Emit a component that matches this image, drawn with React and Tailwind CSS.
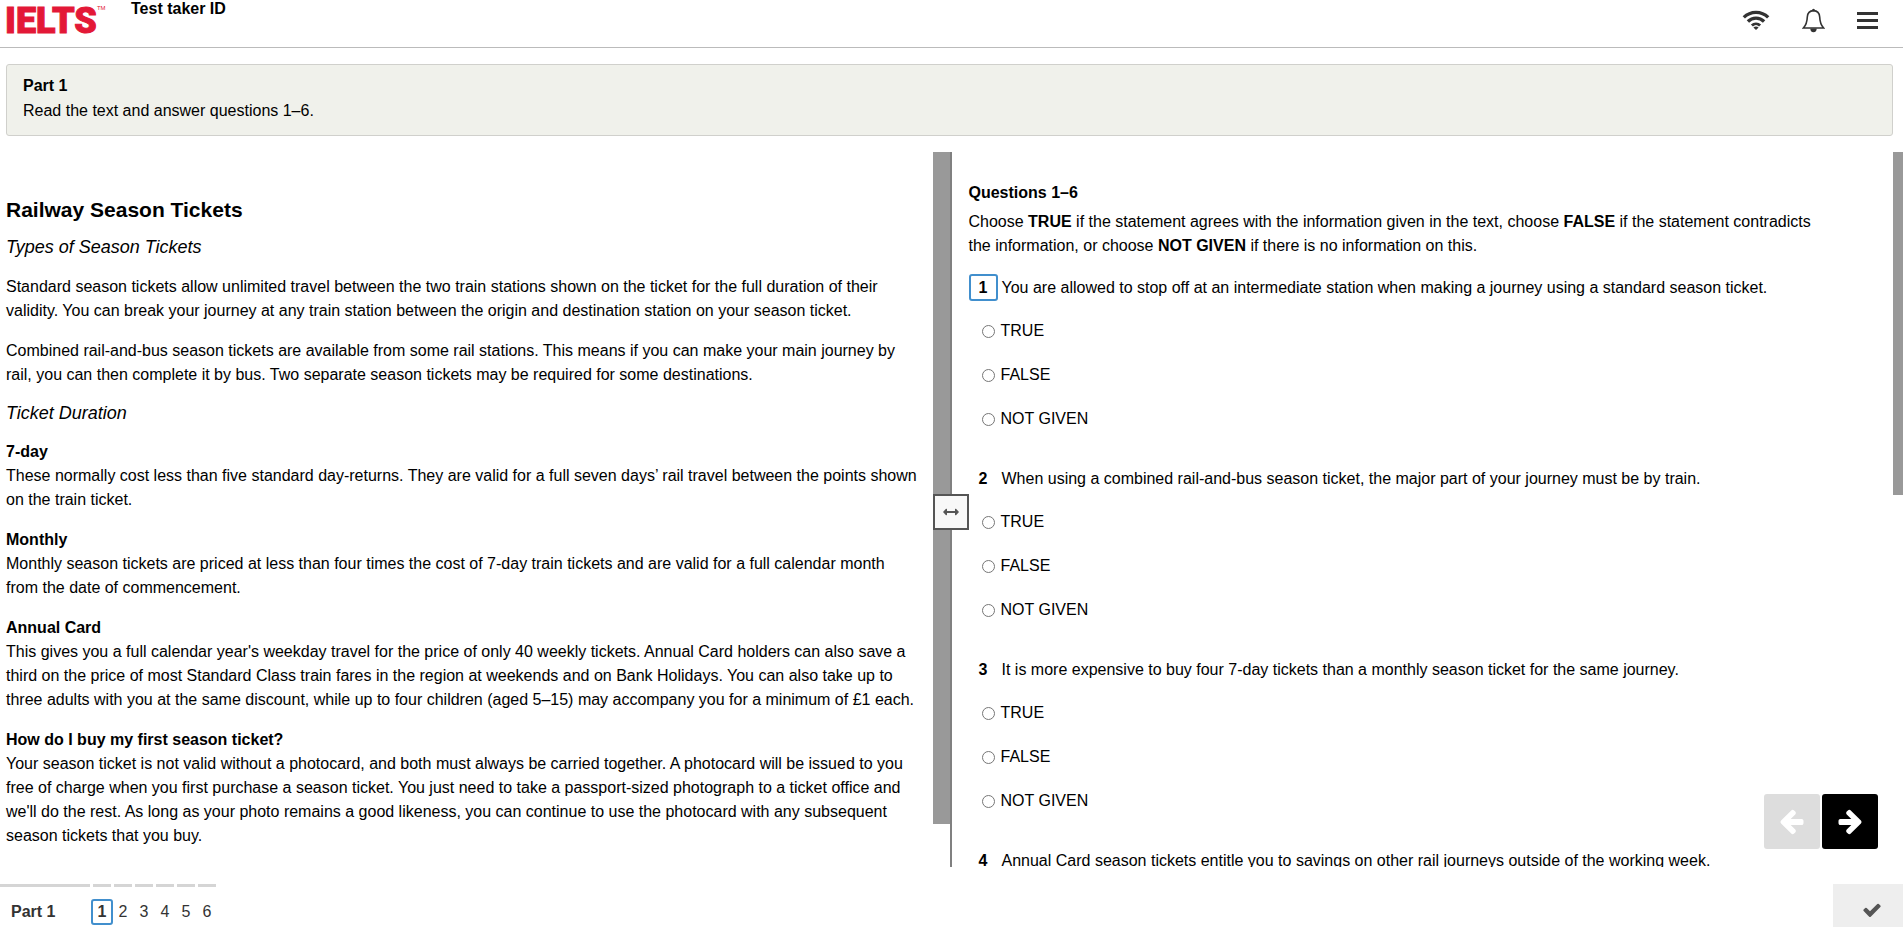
import { useState } from "react";

const CHOICES = ["TRUE", "FALSE", "NOT GIVEN"];

const QUESTIONS = [
  "You are allowed to stop off at an intermediate station when making a journey using a standard season ticket.",
  "When using a combined rail-and-bus season ticket, the major part of your journey must be by train.",
  "It is more expensive to buy four 7-day tickets than a monthly season ticket for the same journey.",
  "Annual Card season tickets entitle you to savings on other rail journeys outside of the working week.",
];

const SECTIONS = [
  ["7-day", "These normally cost less than five standard day-returns. They are valid for a full seven days’ rail travel between the points shown on the train ticket."],
  ["Monthly", "Monthly season tickets are priced at less than four times the cost of 7-day train tickets and are valid for a full calendar month from the date of commencement."],
  ["Annual Card", "This gives you a full calendar year's weekday travel for the price of only 40 weekly tickets. Annual Card holders can also save a third on the price of most Standard Class train fares in the region at weekends and on Bank Holidays. You can also take up to three adults with you at the same discount, while up to four children (aged 5–15) may accompany you for a minimum of £1 each."],
  ["How do I buy my first season ticket?", "Your season ticket is not valid without a photocard, and both must always be carried together. A photocard will be issued to you free of charge when you first purchase a season ticket. You just need to take a passport-sized photograph to a ticket office and we'll do the rest. As long as your photo remains a good likeness, you can continue to use the photocard with any subsequent season tickets that you buy."],
];

function WifiIcon() {
  return (
    <svg width="28" height="20" viewBox="0 0 28 20" fill="none" stroke="#333" strokeWidth="3.3" aria-hidden="true">
      <path d="M1.8 7.400C8.600.700 19.400.700 26.200 7.400" />
      <path d="M5.900 11.500C10.400 7 17.600 7 22.100 11.500" />
      <path d="M9.900 15.500C12.200 13.200 15.800 13.200 18.100 15.500" strokeWidth="2.800" />
      <path d="M14 20l-2.600-2.600q2.600-2 5.200 0z" fill="#333" stroke="none" />
    </svg>
  );
}

function BellIcon() {
  return (
    <svg width="23" height="25" viewBox="0 0 23 25" fill="none" stroke="#333" strokeWidth="1.6" aria-hidden="true">
      <path d="M11.500 2.600C7.700 2.800 5.500 5.400 5.300 9C5.100 14.500 4.200 17 1.400 20H21.600C18.800 17 17.900 14.500 17.700 9C17.500 5.400 15.300 2.800 11.500 2.600Z" />
      <path d="M10 2.600a1.500 1.900 0 0 1 3 0z M8.300 20.500h6.400a3.200 3.700 0 0 1-6.400 0z" fill="#333" stroke="none" />
    </svg>
  );
}

function MenuIcon() {
  return (
    <svg width="21" height="17" viewBox="0 0 21 17" fill="#333" aria-hidden="true">
      <path d="M0 0h21v3H0zM0 7h21v3H0zM0 14h21v3H0z" />
    </svg>
  );
}

function ResizeIcon() {
  return (
    <svg width="16" height="8" viewBox="0 0 16 8" fill="#555" aria-hidden="true">
      <path d="M0 4 3 .8Q4 .4 4 1.400V3h8V1.400Q12 .4 13 .8L16 4l-3 3.200Q12 7.600 12 6.600V5H4v1.600Q4 7.600 3 7.200z" />
    </svg>
  );
}

function ArrowIcon({ flipped }) {
  return (
    <svg width="28" height="28" viewBox="-32 64 1792 1792" fill="currentColor" className={flipped ? "rotate-180" : ""} aria-hidden="true">
      <path d="M1600 960q0 54-37 91l-651 651q-39 37-91 37-51 0-90-37l-75-75q-38-38-38-91t38-91l293-293h-704q-52 0-84.500-37.500t-32.500-90.500v-128q0-53 32.500-90.500t84.500-37.500h704l-293-294q-38-36-38-90t38-90l75-75q38-38 90-38 53 0 91 38l651 651q37 35 37 90z" />
    </svg>
  );
}

function CheckIcon() {
  return (
    <svg width="20" height="20" viewBox="0 0 1792 1792" fill="currentColor" aria-hidden="true">
      <path d="M1671 566q0 40-28 68l-724 724-136 136q-28 28-68 28t-68-28l-136-136-362-362q-28-28-28-68t28-68l136-136q28-28 68-28t68 28l294 295 656-657q28-28 68-28t68 28l136 136q28 28 28 68z" />
    </svg>
  );
}

function Header() {
  return (
    <header className="flex h-12 shrink-0 items-start justify-between border-b border-[#bbb] pl-[5px] pr-[25px]">
      <div className="flex items-start">
        <div className="flex w-[126px] items-start text-[#e31837]">
          <span className="font-[Roboto,sans-serif] text-[36px] font-black leading-[42px] [-webkit-text-stroke:1px_#e31837]">IELTS</span>
          <span className="pt-1 text-[6px] leading-2">TM</span>
        </div>
        <p className="font-bold leading-[18px]">Test taker ID</p>
      </div>
      <nav aria-label="Tools" className="flex h-10 items-center gap-8">
        <button type="button" aria-label="Connection status"><WifiIcon /></button>
        <button type="button" aria-label="Notifications"><BellIcon /></button>
        <button type="button" aria-label="Menu"><MenuIcon /></button>
      </nav>
    </header>
  );
}

function Passage() {
  return (
    <article className="min-w-0 flex-1 pl-1.5 pr-3.5 pt-[42px]">
      <h1 className="text-[21px] font-bold leading-8">Railway Season Tickets</h1>
      <h2 className="mt-[7px] text-lg italic leading-7">Types of Season Tickets</h2>
      <p className="mt-3.5">
        Standard season tickets allow unlimited travel between the two train stations shown on the ticket for the full duration of their validity. You can break your journey at any train station between the origin and destination station on your season ticket.
      </p>
      <p className="mt-4">
        Combined rail-and-bus season tickets are available from some rail stations. This means if you can make your main journey by rail, you can then complete it by bus. Two separate season tickets may be required for some destinations.
      </p>
      <h2 className="mb-[13px] mt-3 text-lg italic leading-7">Ticket Duration</h2>
      {SECTIONS.map(([title, body]) => (
        <section key={title} className="mb-4">
          <h3 className="font-bold">{title}</h3>
          <p>{body}</p>
        </section>
      ))}
    </article>
  );
}

function Question({ number, text, current }) {
  const [answer, setAnswer] = useState(null);
  return (
    <fieldset className="mb-6">
      <legend className="flex items-center gap-1">
        <span
          className={
            current
              ? "flex h-[27px] w-[29px] items-center justify-center rounded-[3px] border-2 border-[#418fcd] font-bold"
              : "flex h-[27px] w-[29px] items-center justify-center font-bold"
          }
        >
          {number}
        </span>
        <span>{text}</span>
      </legend>
      <div className="mt-2">
        {CHOICES.map((choice) => (
          <label key={choice} className="flex h-11 items-center gap-1.5 pl-[13px]">
            <input
              type="radio"
              name={`question-${number}`}
              checked={answer === choice}
              onChange={() => setAnswer(choice)}
              className="size-[13px]"
            />
            {choice}
          </label>
        ))}
      </div>
    </fieldset>
  );
}

function Questions() {
  return (
    <section className="min-w-0 flex-1 pl-[17px] pr-20 pt-[29px]">
      <h2 className="font-bold">Questions 1–6</h2>
      <p className="mb-4 mt-[5px]">
        Choose <b>TRUE</b> if the statement agrees with the information given in the text, choose <b>FALSE</b> if the statement contradicts the information, or choose <b>NOT GIVEN</b> if there is no information on this.
      </p>
      {QUESTIONS.map((text, i) => (
        <Question key={text} number={i + 1} text={text} current={i === 0} />
      ))}
    </section>
  );
}

function Footer() {
  return (
    <footer className="flex h-[43px] shrink-0 items-stretch justify-between text-[#333]">
      <nav aria-label="Questions" className="flex gap-[3px]">
        <div className="w-[90px] border-t-3 border-[#d5d5d5] pl-[11px] pt-[13px] font-bold">Part 1</div>
        {[1, 2, 3, 4, 5, 6].map((n) => (
          <div key={n} className="flex w-[18px] justify-center border-t-3 border-[#d5d5d5] pt-3">
            <button
              type="button"
              className={
                n === 1
                  ? "h-[26px] w-[22px] shrink-0 rounded-[3px] border-2 border-[#418fcd] font-bold leading-5"
                  : "h-[26px] w-[18px] shrink-0"
              }
            >
              {n}
            </button>
          </div>
        ))}
      </nav>
      <button type="button" aria-label="Review answers" className="flex w-[70px] items-center justify-center bg-[#eee] pl-2 pt-2 text-[#555]">
        <CheckIcon />
      </button>
    </footer>
  );
}

export default function App() {
  return (
    <div className="flex h-screen flex-col overflow-hidden bg-white font-['Liberation_Sans',Arial,sans-serif] text-base leading-6 text-black">
      <Header />
      <section className="ml-1.5 mr-2.5 mt-4 shrink-0 rounded-[3px] border border-[#d0d0cc] bg-[#f0f1eb] px-4 pb-3 pt-[9px]">
        <h2 className="font-bold">Part 1</h2>
        <p className="mt-px">Read the text and answer questions 1–6.</p>
      </section>
      <main className="relative mb-[17px] mt-4 flex min-h-0 flex-1">
        <div className="flex w-1/2 shrink-0 overflow-hidden border-r-2 border-[#808080]">
          <Passage />
          <div className="h-[94%] w-[17px] shrink-0 bg-[#999]" />
        </div>
        <div className="flex min-w-0 flex-1 overflow-hidden">
          <Questions />
          <div className="h-[48%] w-2.5 shrink-0 bg-[#999]" />
        </div>
        <button
          type="button"
          aria-label="Resize panes"
          className="absolute left-1/2 top-1/2 flex size-9 -translate-x-[19px] -translate-y-4 items-center justify-center border-2 border-[#555] bg-[#f8f8f8]"
        >
          <ResizeIcon />
        </button>
        <div className="absolute bottom-[18px] right-[25px] flex gap-0.5">
          <button type="button" aria-label="Previous" className="flex h-[55px] w-14 items-center justify-center rounded-[3px] bg-[#ddd] text-white">
            <ArrowIcon flipped />
          </button>
          <button type="button" aria-label="Next" className="flex h-[55px] w-14 items-center justify-center rounded-[3px] bg-black text-white">
            <ArrowIcon />
          </button>
        </div>
      </main>
      <Footer />
    </div>
  );
}
